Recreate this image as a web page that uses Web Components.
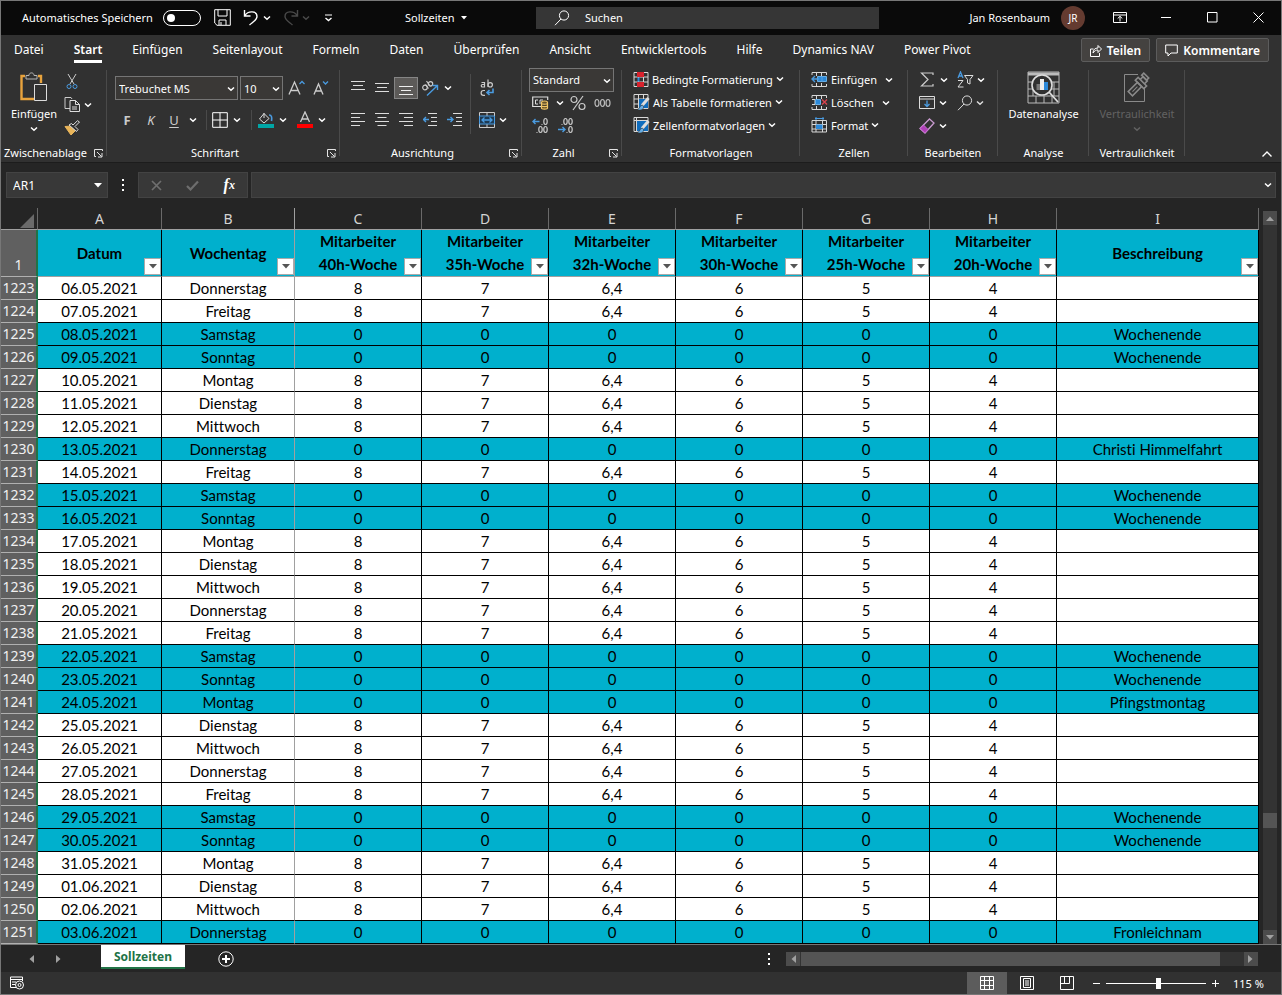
<!DOCTYPE html>
<html lang="de">
<head>
<meta charset="utf-8">
<title>Sollzeiten</title>
<style>
  html, body { margin: 0; background: #262626; }
  body { font-family: "Noto Sans", "Open Sans", sans-serif; font-size: 11px; color: #fff; }
</style>
</head>
<body>
<xl-app></xl-app>
<script>
const BASE = `
  :host, *, *::before { box-sizing: border-box; }
  button, input, select { font: inherit; color: inherit; background: none; border: 0; padding: 0; margin: 0; border-radius: 0; }
  button { display: inline-flex; align-items: center; justify-content: center; white-space: nowrap; }
`;
function define(name, html, setup) {
  const template = document.createElement('template');
  template.innerHTML = html;
  customElements.define(name, class extends HTMLElement {
    constructor() {
      super();
      this.attachShadow({ mode: 'open' }).append(template.content.cloneNode(true));
    }
    connectedCallback() {
      if (setup && !this.ready) { this.ready = true; setup(this, this.shadowRoot); }
    }
  });
}

/* Icons: [width, height, markup]; strokes inherit currentColor */
const GRID = '<path d="M1 .5h14v14H1zM1 5h14M1 10h14M5.5.5v14M10.5.5v14" stroke="#d8d8d8"/>';
const ICONS = {
  chev: [8, 6, '<path d="M1 1.5 4 4.3 7 1.5" stroke-width="1.5"/>'],
  up: [12, 8, '<path d="M1.5 6.5 6 2l4.500 4.500" stroke-width="1.400"/>'],
  tri: [8, 5, '<path d="M0 0h8L4 4.500z" fill="currentColor" stroke="none"/>'],
  triUp: [8, 5, '<path d="M0 5h8L4 .5z" fill="currentColor" stroke="none"/>'],
  triLeft: [5, 8, '<path d="M5 0v8L.5 4z" fill="currentColor" stroke="none"/>'],
  triRight: [5, 8, '<path d="M0 0v8l4.500-4z" fill="currentColor" stroke="none"/>'],
  save: [17, 17, '<path d="M.7.7h15.600v15.600H3L.7 14zM4 .7V7h9V.7M5 16v-5h7v5M7 16v-3"/>'],
  undo: [16, 17, '<path d="M1.500 1v6h6M2 6.500C5 1.500 14 1.500 14 7.500 14 11 10 13 6.500 16" stroke-width="1.400"/>'],
  redo: [16, 17, '<path d="M14.500 1v6h-6M14 6.500C11 1.500 2 1.500 2 7.500 2 11 6 13 9.500 16" stroke-width="1.400"/>'],
  qat: [9, 8, '<path d="M1 1h7"/><path d="M1.500 4 4.500 6.500 7.500 4" stroke-width="1.400"/>'],
  lens: [16, 16, '<circle cx="10" cy="5.500" r="4.600"/><path d="M7 9 1 15.200"/>'],
  ribbonOpts: [14, 11, '<path d="M.5.5h13v10H.5zM.5 3h13M7 9.500V4.500M4.700 6.500 7 4.300l2.300 2.200"/>'],
  min: [10, 10, '<path d="M0 4.500h10"/>'],
  max: [11, 11, '<path d="M.5.5h9.500v9.500H.5z"/>'],
  close: [11, 11, '<path d="M.5.5l10 10M10.500.5l-10 10"/>'],
  share: [12, 13, '<path d="M3.500 5H.5v7.500h9V9M3 9c.3-3.500 2-5 5-5V1.500L11.500 5 8 8.500V6C6 6 4.500 6.800 3 9z"/>'],
  comment: [13, 13, '<path d="M.7 1h11.600v8H6l-3 3V9H.7z"/>'],
  paste: [30, 33, '<path d="M6 5H2.500v23H15M19 5h3v7" stroke="#e8a33d" stroke-width="2.400"/><path d="M7 8V4.500h3C10 1 15 1 15 4.500h3V8z" stroke="#b5b5b5" fill="#313131"/><path d="M15.500 13.500h12v16h-12z" stroke="#ddd" fill="#313131"/>'],
  cut: [14, 17, '<path d="M3 1l6 10M11 1 5 11" stroke="#ccc"/><circle cx="4" cy="13.500" r="2" stroke="#4a9be0"/><circle cx="10" cy="13.500" r="2" stroke="#4a9be0"/>'],
  copy: [17, 17, '<path d="M6 12.500H1v-11h6L8 3" stroke="#ccc"/><path d="M6 4.500h5.500l4 4v7H6zM11.500 4.500v4h4M8 11h5M8 13h5" stroke="#ddd"/>'],
  brush: [17, 16, '<path d="M1 6.500 7 15l5-5-4-4z" fill="#e9b55a" stroke="#e9b55a"/><path d="M5 5l7.500 6.500 1.500-2-3-3L15.500 2 13.500.7 9 5 7.500 3.500z" stroke="#ddd" fill="#313131"/>'],
  borders: [16, 16, '<path d="M.7.7h14.600v14.600H.7zM8 .7v14.600M.7 8h14.600"/>'],
  bucket: [18, 18, '<path d="M7 2v5M7 2.500 2.500 8l4.500 4 5-4.500z" stroke="#ddd"/><path d="M12 4c3 0 3 3 2.500 6" stroke="#4a9be0" stroke-width="1.600"/><path d="M1 13h16v4H1z" fill="#00a6a6" stroke="none"/>'],
  fontColor: [18, 18, '<path d="M4.500 11 9 1l4.500 10M6 8h6" stroke="#ccc" stroke-width="1.300"/><path d="M1 13h16v4H1z" fill="#f00" stroke="none"/>'],
  growFont: [18, 16, '<path d="M1 14.500 6.500 2 12 14.500M3 10.500h7" stroke="#ccc" stroke-width="1.300"/><path d="M11.500 4 14 1.500 16.500 4" stroke="#4a9be0" stroke-width="1.300"/>'],
  shrinkFont: [18, 16, '<path d="M2 14.500 6.500 4 11 14.500M3.500 11h6" stroke="#ccc" stroke-width="1.300"/><path d="M11 1.500 13.500 4 16 1.500" stroke="#4a9be0" stroke-width="1.300"/>'],
  top: [14, 14, '<path d="M0 .5h14M2 4.500h10M0 8.500h14" stroke="#ddd"/>'],
  middle: [14, 14, '<path d="M0 2.500h14M2 6.500h10M0 10.500h14" stroke="#ddd"/>'],
  bottom: [14, 14, '<path d="M0 5.500h14M2 9.500h10M0 13.500h14" stroke="#eee"/>'],
  left: [14, 14, '<path d="M0 .5h14M0 4.500h9M0 8.500h14M0 12.500h9" stroke="#ddd"/>'],
  center: [14, 14, '<path d="M0 .5h14M2.500 4.500h9M0 8.500h14M2.500 12.500h9" stroke="#ddd"/>'],
  right: [14, 14, '<path d="M0 .5h14M5 4.500h9M0 8.500h14M5 12.500h9" stroke="#ddd"/>'],
  outdent: [14, 14, '<path d="M5 .5h9M8 4.500h6M8 8.500h6M5 12.500h9" stroke="#ddd"/><path d="M6 6.500H.5M3 4 .5 6.500 3 9" stroke="#4a9be0" stroke-width="1.400"/>'],
  indent: [15, 14, '<path d="M6 .5h9M9 4.500h6M9 8.500h6M6 12.500h9" stroke="#ddd"/><path d="M0 6.500h6M3.500 4 6 6.500 3.500 9" stroke="#4a9be0" stroke-width="1.400"/>'],
  orient: [18, 17, '<g stroke="#ccc" stroke-width="1.200"><circle cx="4" cy="7.500" r="2.300"/><path d="M4.500 4.500 7.500 8.500M5.500 1l4 5.500"/><circle cx="9.500" cy="3.800" r="2.200"/></g><path d="M6 15.500 16 6M11.500 5.500H16.500V10" stroke="#4a9be0" stroke-width="1.400"/>'],
  wrap: [16, 18, '<g stroke="#ccc" stroke-width="1.200"><path d="M2.500 3.500H5.500V8H3.500a1.200 1.200 0 0 1 0-2.500h2M9 .5V8"/><circle cx="11.200" cy="5.800" r="2.200"/><path d="M6 11.500H4.500a2.400 2.400 0 0 0 0 4.800H6"/></g><path d="M14 9.500v4H8M10.500 11 8 13.500 10.500 16" stroke="#4a9be0" stroke-width="1.600"/>'],
  merge: [16, 16, '<path d="M.5.5h15v15H.5zM8 .5V4M8 12v3" stroke="#ccc"/><path d="M.5 4h15v8H.5z" stroke="#4a9be0" fill="#1f3a52"/><path d="M3 8h10M5.500 5.500 3 8l2.500 2.500M10.500 5.500 13 8l-2.500 2.500" stroke="#4a9be0" stroke-width="1.300"/>'],
  currency: [18, 15, '<path d="M9 11.500H.7V2h15v3" stroke="#ddd" stroke-width="1.200"/><path d="M6 5H3.500v4H6M8 9V5h3" stroke="#ddd"/><path d="M9.500 7.500c0-2 6-2 6 0V13c0 1.500-6 1.500-6 0zM9.500 8c0 1.500 6 1.500 6 0M9.500 10.500c0 1.500 6 1.500 6 0" stroke="#f0c566" stroke-width="1.200" fill="#6b5426"/>'],
  percent: [16, 16, '<g stroke-width="1.200"><circle cx="4" cy="4.500" r="3"/><circle cx="12" cy="11.500" r="3"/><path d="M13 1 3 15"/></g>'],
  thousands: [17, 10, '<g stroke-width="1.200"><ellipse cx="3" cy="5" rx="2" ry="3.500"/><ellipse cx="8.500" cy="5" rx="2" ry="3.500"/><ellipse cx="14" cy="5" rx="2" ry="3.500"/></g>'],
  incDec: [17, 17, '<path d="M7.500 4.500H1M3.500 2 1 4.500 3.500 7" stroke="#4a9be0" stroke-width="1.400"/><g stroke="#ccc" stroke-width="1.200"><ellipse cx="13.500" cy="4.500" rx="1.700" ry="3"/><ellipse cx="8.500" cy="12.500" rx="1.700" ry="3"/><ellipse cx="13.500" cy="12.500" rx="1.700" ry="3"/><path d="M9.500 7.500h1M4.500 15.500h1"/></g>'],
  decDec: [17, 17, '<path d="M1 12.500h7M5.500 10 8 12.500 5.500 15" stroke="#4a9be0" stroke-width="1.400"/><g stroke="#ccc" stroke-width="1.200"><ellipse cx="8.500" cy="4.500" rx="1.700" ry="3"/><ellipse cx="13.500" cy="4.500" rx="1.700" ry="3"/><ellipse cx="13.500" cy="12.500" rx="1.700" ry="3"/><path d="M4.500 7.500h1M9.500 15.500h1"/></g>'],
  conditional: [16, 15, GRID + '<path d="M4 0h7v5H4zM4 10h7v5H4z" fill="#d8232e" stroke="none"/><path d="M4.500 5.500h2v4h-2z" fill="#2b88d8" stroke="none"/>'],
  tableFormat: [17, 17, GRID + '<path d="M6 5h9v9H6z" fill="#0f6cbd" stroke="none"/><path d="M15.500 4 9 11.500" stroke="#ddd" stroke-width="3"/><path d="M9.500 11c-3 0-2 4-5.500 4.500 4 1.500 7 0 6.500-3z" fill="#69afe5" stroke="#313131" stroke-width=".6"/>'],
  cellStyles: [17, 17, '<path d="M1 .5h14v14H1zM1 3.500h14M3.500.5v14" stroke="#d8d8d8"/><path d="M4 4h11v10H4z" fill="#0f6cbd" stroke="none"/><path d="M15.500 4 9 11.500" stroke="#ddd" stroke-width="3"/><path d="M9.500 11c-3 0-2 4-5.500 4.500 4 1.500 7 0 6.500-3z" fill="#69afe5" stroke="#313131" stroke-width=".6"/>'],
  insertCells: [17, 15, '<path d="M1 3V.5h14.500V3M5.500.5V4M10.500.5V4M1 12v2.500h14.500V12M5.500 11v3.500M10.500 11v3.500" stroke="#d8d8d8"/><path d="M6.500 4.500h9v5h-9z" fill="#2b88d8" stroke="#69afe5"/><path d="M11 4.500v5M8 7H1M4 4 1 7l3 3" stroke="#4a9be0" stroke-width="1.400"/>'],
  deleteCells: [17, 15, '<path d="M1 3V.5h14.500V3M5.500.5V4M10.500.5V4M1 12v2.500h14.500V12M5.500 11v3.500M10.500 11v3.500M1 4.500h3v5H1" stroke="#d8d8d8"/><path d="M4.500 4.500h5v5h-5z" fill="#2b88d8" stroke="#69afe5"/><path d="m11 4.500 5 5M16 4.500l-5 5" stroke="#d8434e" stroke-width="1.400"/>'],
  formatCells: [17, 16, '<path d="M1 3.500h14.500V15H1zM1 7.500h14.500M1 12h14.500M5 3.500V15M11.500 3.500V15" stroke="#d8d8d8"/><path d="M5 7.500h6.500V12H5z" fill="#2b88d8" stroke="none"/><path d="M4 1.500h9M5 0v3M12 0v3" stroke="#4a9be0"/>'],
  sum: [14, 15, '<path d="M13 3V1H1.500L8 7.500 1.500 14H13v-2" stroke="#ccc" stroke-width="1.200"/>'],
  sort: [17, 17, '<path d="M1 7 3.500 1 6 7M2 5h3" stroke="#4a9be0" stroke-width="1.300"/><path d="M1 9.500h5L1 16h5.500M7.500 4.500h8.500L13 8.500V13l-2.500-1V8.500z" stroke="#ddd"/>'],
  fill: [16, 15, '<path d="M.5 1.500h15v12H.5zM.5 4h15" stroke="#ddd"/><path d="M8 5.500v6M5.500 9 8 11.500 10.500 9" stroke="#4a9be0" stroke-width="1.300"/>'],
  eraser: [16, 16, '<path d="M10.500 1 15 5 6 15 1 10.500z" stroke="#c99bd0" stroke-width="1.300"/><path d="M4.500 7 9 11.500 6 15 1 10.500z" fill="#b03fb8" stroke="#c66ace"/>'],
  analysis: [33, 33, '<path d="M1 1h31v31H1zM1 11h31M1 18h31M1 25h31M9 25v7M17 25v7M25 25v7M6 11v14M27 11v14" stroke="#bbb"/><path d="M1 3h31" stroke="#bbb" stroke-width="3"/><circle cx="15" cy="14" r="10" fill="#313131" stroke="#ddd" stroke-width="1.600"/><path d="M22 21l9 10" stroke="#ddd" stroke-width="1.800"/><path d="M9.500 13h3.500v6H9.500z" fill="#777" stroke="none"/><path d="M13 8h4v11h-4z" fill="#eee" stroke="none"/><path d="M17 11h4v8h-4z" fill="#2b88d8" stroke="none"/>'],
  sensitivity: [30, 33, '<g stroke="#8a8a8a"><path d="M16 3.500H2.500v27h20V16"/><g transform="rotate(-45 14 17)"><path d="M6 14h13v6H6z" stroke-width="1.600"/><path d="M9 17h7"/><path d="M19 11h4v12h-4z" stroke-width="1.600"/><path d="M23 14h4v6h-4" stroke-width="1.600"/><path d="M27 12h3v7h-3z" stroke-width="1.600"/></g></g>'],
  launcher: [9, 9, '<path d="M2 7.500H.5V.5h8V2M3 3l4.500 4.500M8 4v4H4" stroke="#e4e4e4"/>'],
  x: [11, 11, '<path d="m1 1 9 9M10 1l-9 9" stroke-width="1.700"/>'],
  check: [13, 11, '<path d="m1 6 3.500 3.500L12 1.500" stroke-width="2.200"/>'],
  dots: [3, 12, '<path d="M0 0h2v2H0zM0 5h2v2H0zM0 10h2v2H0z" fill="currentColor" stroke="none"/>'],
  plusCircle: [16, 16, '<circle cx="8" cy="8" r="7.200"/><path d="M4 8h8M8 4v8" stroke-width="2"/>'],
  macro: [16, 14, '<path d="M7 11.500H1.500V1h12v4M1.500 3.500h12M3 6h4M3 8.500h3"/><circle cx="10.500" cy="9" r="4"/><circle cx="10.500" cy="9" r="1.500"/>'],
  viewNormal: [14, 14, '<path d="M.5.5h13v13H.5zM.5 4.500h13M.5 9.500h13M4.500.5v13M9.500.5v13"/>'],
  viewPage: [14, 14, '<path d="M.5.5h13v13H.5zM3.500 2.500h7v9h-7zM5 5h4M5 7h4M5 9h4"/>'],
  viewBreak: [14, 14, '<path d="M.5.5h13v13H.5zM4.500.5v7M9.500.5v7H.5"/>'],
  minus: [9, 9, '<path d="M1 4.500h7"/>'],
  plus: [9, 9, '<path d="M1 4.500h7M4.500 1v7"/>'],
  corner: [14, 14, '<path d="M14 0v14H0z" fill="#6a6a6a" stroke="none"/>']
};
define('xl-icon', `<style>:host{display:inline-flex;flex:none} svg{display:block}</style><span part="box"></span>`, (el, root) => {
  const [w, h, body] = ICONS[el.getAttribute('name')];
  root.querySelector('span').innerHTML = `<svg width="${w}" height="${h}" viewBox="0 0 ${w} ${h}" fill="none" stroke="currentColor" aria-hidden="true">${body}</svg>`;
});

/* Ribbon command: icon, optional caption in the slot, optional drop-down arrow */
define('xl-cmd', `<style>${BASE}
  :host { display: inline-flex; flex: none; }
  button { height: 22px; width: 100%; min-width: var(--cell, 16px); gap: 3px; }
  :host([pressed]) button { background: #5c5a58; border: 1px solid #858585; }
  :host([letter]) button { color: #ccc; font-size: 13px; }
</style><button type="button"><slot></slot></button>`, (el, root) => {
  const button = root.querySelector('button');
  button.setAttribute('aria-label', el.getAttribute('label') || el.textContent.trim() || 'Menü');
  const icon = el.getAttribute('icon');
  if (icon) button.insertAdjacentHTML('afterbegin', `<xl-icon name="${icon}"></xl-icon>`);
  if (el.hasAttribute('drop')) button.insertAdjacentHTML('beforeend', '<xl-icon name="chev"></xl-icon>');
});

define('xl-big-cmd', `<style>${BASE}
  :host { display: block; }
  button { flex-direction: column; justify-content: flex-start; width: 100%; line-height: 18px; }
  button:disabled { color: #626262; }
  .pic { height: 35px; display: flex; align-items: center; }
  .drop { height: 12px; display: flex; align-items: center; }
</style><button type="button"><span class="pic"></span><slot></slot><span class="drop"></span></button>`, (el, root) => {
  root.querySelector('.pic').innerHTML = `<xl-icon name="${el.getAttribute('icon')}"></xl-icon>`;
  if (el.hasAttribute('drop')) root.querySelector('.drop').innerHTML = '<xl-icon name="chev"></xl-icon>';
  root.querySelector('button').disabled = el.hasAttribute('disabled');
});

define('xl-select', `<style>${BASE}
  :host { display: inline-block; flex: none; position: relative; }
  select { appearance: none; display: block; width: 100%; height: 24px; border: 1px solid #757575; background: #3a3836; padding: 0 14px 0 3px; }
  xl-icon { position: absolute; right: 3px; top: 10px; pointer-events: none; }
</style><select><option></option></select><xl-icon name="chev"></xl-icon>`, (el, root) => {
  root.querySelector('option').textContent = el.getAttribute('value');
  root.querySelector('select').setAttribute('aria-label', el.getAttribute('label'));
});

define('xl-group', `<style>${BASE}
  :host { display: grid; grid-template-rows: 79px 17px; position: relative; flex: none; }
  :host::after { content: ""; position: absolute; right: 0; top: 4px; bottom: 6px; width: 1px; background: #4a4a4a; }
  footer { display: flex; align-items: center; line-height: 16px; padding-bottom: 1px; }
  footer span { flex: 1; text-align: center; white-space: nowrap; }
  :host([launcher]) footer { padding-right: 4px; }
  :host([launcher]) footer span { padding-right: 4px; }
</style><slot></slot><footer><span></span></footer>`, (el, root) => {
  root.querySelector('span').textContent = el.getAttribute('label');
  if (el.hasAttribute('launcher'))
    root.querySelector('footer').insertAdjacentHTML('beforeend', '<button type="button" aria-label="Mehr Optionen"><xl-icon name="launcher"></xl-icon></button>');
});

define('xl-title-bar', `<style>${BASE}
  :host { display: grid; grid-template-columns: 535px minmax(120px, 343px) 1fr; align-items: center; height: 34px; background: #0a0a0a; }
  .left, .right { display: flex; align-items: center; height: 34px; padding-bottom: 1px; }
  .left { padding-left: 21px; }
  .right { justify-content: flex-end; }
  label { display: flex; align-items: center; gap: 7px; white-space: nowrap; }
  .auto span { width: 134px; }
  .auto input { appearance: none; width: 38px; height: 16px; border: 1px solid #fff; border-radius: 8px; position: relative; }
  .auto input::before { content: ""; position: absolute; left: 3px; top: 3px; width: 8px; height: 8px; border-radius: 50%; background: #fff; }
  .save { margin-left: 13px; } .undo { margin-left: 12px; gap: 4px; } .redo { margin-left: 12px; gap: 3px; color: #4a4a4a; }
  .qat { margin-left: 14px; }
  .file { margin-left: 72px; gap: 6px; }
  .search { height: 22px; background: #363636; padding: 0 0 1px 18px; gap: 15px; }
  .search input { flex: 1; min-width: 0; outline: 0; }
  .search input::placeholder { color: #fff; opacity: 1; }
  .user { gap: 11px; margin-right: 12px; }
  .avatar { width: 24px; height: 24px; border-radius: 50%; background: #643b30; display: grid; place-items: center; font-size: 10px; }
  .win { width: 46px; height: 32px; flex: none; }
</style>
<div class="left">
  <label class="auto"><span>Automatisches Speichern</span><input type="checkbox" role="switch"></label>
  <button class="save" aria-label="Speichern"><xl-icon name="save"></xl-icon></button>
  <button class="undo" aria-label="Rückgängig"><xl-icon name="undo"></xl-icon><xl-icon name="chev"></xl-icon></button>
  <button class="redo" aria-label="Wiederholen"><xl-icon name="redo"></xl-icon><xl-icon name="chev"></xl-icon></button>
  <button class="qat" aria-label="Symbolleiste anpassen"><xl-icon name="qat"></xl-icon></button>
  <button class="file">Sollzeiten <svg width="6" height="4"><path d="M0 0h6L3 3.500z" fill="#fff"/></svg></button>
</div>
<label class="search"><xl-icon name="lens"></xl-icon><input type="search" placeholder="Suchen" aria-label="Suchen"></label>
<div class="right">
  <button class="user">Jan Rosenbaum <span class="avatar">JR</span></button>
  <button class="win" aria-label="Menüband-Anzeigeoptionen"><xl-icon name="ribbonOpts"></xl-icon></button>
  <button class="win" aria-label="Minimieren"><xl-icon name="min"></xl-icon></button>
  <button class="win" aria-label="Maximieren"><xl-icon name="max"></xl-icon></button>
  <button class="win" aria-label="Schließen"><xl-icon name="close"></xl-icon></button>
</div>`);

define('xl-tabs', `<style>${BASE}
  :host { display: flex; align-items: center; justify-content: space-between; height: 31px; background: #313131; padding: 0 12px 0 13px; font-size: 12px; }
  nav { display: flex; gap: 30px; }
  nav a { color: inherit; text-decoration: none; line-height: 20px; white-space: nowrap; border-bottom: 3px solid transparent; margin-top: 2px; }
  nav a[aria-current] { font-weight: 600; border-color: #fff; }
  div { display: flex; gap: 6px; margin-bottom: 1px; }
  div button { height: 24px; gap: 5px; padding: 0 8px; font-weight: 600; background: #444240; border: 1px solid #5c5c5c; border-radius: 2px; }
</style>
<nav>
  <a href="#">Datei</a><a href="#" aria-current="page">Start</a><a href="#">Einfügen</a><a href="#">Seitenlayout</a><a href="#">Formeln</a><a href="#">Daten</a><a href="#">Überprüfen</a><a href="#">Ansicht</a><a href="#">Entwicklertools</a><a href="#">Hilfe</a><a href="#">Dynamics NAV</a><a href="#">Power Pivot</a>
</nav>
<div><button><xl-icon name="share"></xl-icon>Teilen</button><button><xl-icon name="comment"></xl-icon>Kommentare</button></div>`);

define('xl-ribbon', `<style>${BASE}
  :host { display: flex; height: 97px; background: #313131; border-bottom: 1px solid #1c1c1c; }
  .row { display: flex; align-items: center; }
  .col { display: flex; flex-direction: column; }
  .three { padding-top: 2px; align-items: flex-start; }
  .three > .row, .three > xl-cmd { height: 23px; }
  .two { padding-top: 10px; gap: 8px; }
  .two > .row { height: 24px; }
  .sep { width: 1px; height: 20px; background: #4a4a4a; margin: 0 5px; }
  .tall { width: 1px; height: 60px; margin: 8px 8px 0 4px; background: #4a4a4a; }
  .c24 { --cell: 24px; } .c22 { --cell: 22px; } .c18 { --cell: 18px; }
  b { font-weight: 700; } u { text-underline-offset: 2px; }
  .collapse { margin: auto 8px 4px auto; }
</style>
<xl-group label="Zwischenablage" launcher style="width:106px">
  <div class="row" style="align-items:flex-start;padding:4px 0 0 3px">
    <xl-big-cmd icon="paste" drop style="width:60px">Einfügen</xl-big-cmd>
    <div class="col three" style="padding:0">
      <div class="row"><xl-cmd icon="cut" label="Ausschneiden"></xl-cmd></div>
      <div class="row"><xl-cmd icon="copy" drop label="Kopieren"></xl-cmd></div>
      <div class="row"><xl-cmd icon="brush" label="Format übertragen"></xl-cmd></div>
    </div>
  </div>
</xl-group>
<xl-group label="Schriftart" launcher style="width:233px">
  <div class="col two" style="padding-left:8px">
    <div class="row"><xl-select value="Trebuchet MS" label="Schriftart" style="width:123px"></xl-select><xl-select value="10" label="Schriftgrad" style="width:43px;margin:0 2px"></xl-select><xl-cmd class="c24" icon="growFont" label="Vergrößern"></xl-cmd><xl-cmd class="c24" icon="shrinkFont" label="Verkleinern"></xl-cmd></div>
    <div class="row"><xl-cmd letter class="c24" label="Fett"><b>F</b></xl-cmd><xl-cmd letter class="c24" label="Kursiv"><i>K</i></xl-cmd><xl-cmd letter class="c22" label="Unterstrichen"><u>U</u></xl-cmd><xl-cmd drop></xl-cmd><span class="sep"></span><xl-cmd icon="borders" label="Rahmen"></xl-cmd><xl-cmd drop class="c18"></xl-cmd><span class="sep"></span><xl-cmd class="c18" icon="bucket" label="Füllfarbe"></xl-cmd><xl-cmd drop></xl-cmd><span style="width:5px"></span><xl-cmd class="c18" icon="fontColor" label="Schriftfarbe"></xl-cmd><xl-cmd drop></xl-cmd></div>
  </div>
</xl-group>
<xl-group label="Ausrichtung" launcher style="width:182px">
  <div class="row" style="align-items:flex-start;padding-left:6px">
    <div class="col two">
      <div class="row"><xl-cmd class="c24" icon="top" label="Oben"></xl-cmd><xl-cmd class="c24" icon="middle" label="Mitte"></xl-cmd><xl-cmd pressed class="c24" icon="bottom" label="Unten"></xl-cmd><xl-cmd class="c24" icon="orient" label="Ausrichtung"></xl-cmd><xl-cmd drop style="--cell:12px"></xl-cmd></div>
      <div class="row"><xl-cmd class="c24" icon="left" label="Links"></xl-cmd><xl-cmd class="c24" icon="center" label="Zentriert"></xl-cmd><xl-cmd class="c24" icon="right" label="Rechts"></xl-cmd><xl-cmd class="c24" icon="outdent" label="Einzug verkleinern"></xl-cmd><xl-cmd class="c24" icon="indent" label="Einzug vergrößern"></xl-cmd></div>
    </div>
    <span class="tall"></span>
    <div class="col two">
      <div class="row"><xl-cmd icon="wrap" label="Textumbruch"></xl-cmd></div>
      <div class="row"><xl-cmd icon="merge" label="Verbinden"></xl-cmd><xl-cmd drop></xl-cmd></div>
    </div>
  </div>
</xl-group>
<xl-group label="Zahl" launcher style="width:100px">
  <div class="col three" style="padding-left:7px">
    <div class="row"><xl-select value="Standard" label="Zahlenformat" style="width:85px"></xl-select></div>
    <div class="row" style="gap:4px;padding-left:3px"><xl-cmd icon="currency" label="Währung"></xl-cmd><xl-cmd drop style="--cell:12px"></xl-cmd><xl-cmd icon="percent" label="Prozent" style="color:#ccc"></xl-cmd><xl-cmd icon="thousands" label="Tausender" style="color:#bbb;padding-left:4px"></xl-cmd></div>
    <div class="row" style="gap:8px;padding-left:3px"><xl-cmd icon="incDec" label="Dezimalstelle hinzufügen"></xl-cmd><xl-cmd icon="decDec" label="Dezimalstelle entfernen"></xl-cmd></div>
  </div>
</xl-group>
<xl-group label="Formatvorlagen" style="width:178px">
  <div class="col three" style="padding-left:11px">
    <xl-cmd icon="conditional" drop>Bedingte Formatierung</xl-cmd>
    <xl-cmd icon="tableFormat" drop>Als Tabelle formatieren</xl-cmd>
    <xl-cmd icon="cellStyles" drop>Zellenformatvorlagen</xl-cmd>
  </div>
</xl-group>
<xl-group label="Zellen" style="width:108px">
  <div class="col three" style="padding-left:11px">
    <div class="row"><xl-cmd icon="insertCells">Einfügen</xl-cmd><xl-cmd drop style="margin-left:4px"></xl-cmd></div>
    <div class="row"><xl-cmd icon="deleteCells">Löschen</xl-cmd><xl-cmd drop style="margin-left:4px"></xl-cmd></div>
    <xl-cmd icon="formatCells" drop>Format</xl-cmd>
  </div>
</xl-group>
<xl-group label="Bearbeiten" style="width:90px">
  <div class="col three" style="padding-left:11px">
    <div class="row"><xl-cmd icon="sum" label="Summe"></xl-cmd><xl-cmd drop class="c18"></xl-cmd><xl-cmd icon="sort" drop label="Sortieren" style="padding-left:4px"></xl-cmd></div>
    <div class="row"><xl-cmd icon="fill" label="Ausfüllen"></xl-cmd><xl-cmd drop></xl-cmd><xl-cmd icon="lens" drop label="Suchen" style="padding-left:6px;color:#ddd"></xl-cmd></div>
    <div class="row"><xl-cmd icon="eraser" label="Löschen"></xl-cmd><xl-cmd drop></xl-cmd></div>
  </div>
</xl-group>
<xl-group label="Analyse" style="width:91px">
  <xl-big-cmd icon="analysis" style="padding-top:4px">Datenanalyse</xl-big-cmd>
</xl-group>
<xl-group label="Vertraulichkeit" style="width:96px">
  <xl-big-cmd icon="sensitivity" drop disabled style="padding-top:4px">Vertraulichkeit</xl-big-cmd>
</xl-group>
<button class="collapse" aria-label="Menüband reduzieren"><xl-icon name="up"></xl-icon></button>`);

define('xl-formula-bar', `<style>${BASE}
  :host { display: flex; height: 45px; padding: 9px 5px 10px; background: #252525; font-size: 12px; }
  .box { display: flex; align-items: center; background: #383838; border: 1px solid #434343; }
  .name { width: 102px; padding: 0 5px 0 6px; }
  .name input { flex: 1; min-width: 0; }
  .dots { width: 30px; display: grid; place-items: center; }
  .tools { width: 110px; justify-content: space-around; color: #6e6e6e; }
  .fx { color: #fff; font: italic 700 16px "Liberation Serif", serif; }
  .fx small { font-size: 12px; }
  .formula { flex: 1; margin-left: 3px; padding-right: 3px; }
  .formula input { flex: 1; }
</style>
<div class="box name"><input value="AR1" aria-label="Namenfeld"><xl-icon name="tri"></xl-icon></div>
<div class="dots"><xl-icon name="dots"></xl-icon></div>
<div class="box tools"><button aria-label="Abbrechen"><xl-icon name="x"></xl-icon></button><button aria-label="Eingeben"><xl-icon name="check"></xl-icon></button><button class="fx">f<small>x</small></button></div>
<div class="box formula"><input aria-label="Bearbeitungsleiste"><button aria-label="Erweitern"><xl-icon name="chev"></xl-icon></button></div>`);

define('xl-scrollbar', `<style>${BASE}
  :host { display: flex; background: #333; color: #a0a0a0; }
  :host([vertical]) { flex-direction: column; }
  button { width: 14px; height: 14px; background: #4c4c4c; flex: none; }
  .before { flex: var(--before) 0 0; } .thumb { flex: var(--thumb) 0 0; background: #545454; } .after { flex: var(--after) 0 0; }
</style><button class="dec" aria-label="Zurück"></button><span class="before"></span><span class="thumb"></span><span class="after"></span><button class="inc" aria-label="Weiter"></button>`, (el, root) => {
  const v = el.hasAttribute('vertical');
  root.querySelector('.dec').innerHTML = `<xl-icon name="${v ? 'triUp' : 'triLeft'}"></xl-icon>`;
  root.querySelector('.inc').innerHTML = `<xl-icon name="${v ? 'tri' : 'triRight'}"></xl-icon>`;
});

define('xl-sheet', `<style>${BASE}
  :host { display: grid; grid-template-columns: minmax(0, 1fr) 22px; background: #252525; }
  table { border-collapse: separate; border-spacing: 0; table-layout: fixed; width: 100%; font: 15px "Trebuchet MS", Lato, sans-serif; font-variant-ligatures: none; color: #000; }
  th, td { padding: 0; text-align: center; font-weight: 400; overflow: hidden; white-space: nowrap; }
  .letters th { height: 22px; color: #d4d4d4; font: 14px "Noto Sans", sans-serif; line-height: 20px; border-right: 1px solid #6a6a6a; border-bottom: 1px solid #a0a0a0; }
  .letters .corner { text-align: right; line-height: 0; padding: 4px 3px 0 0; }
  .corner xl-icon { vertical-align: top; }
  tbody td, tbody .head { border-right: 1px solid #000; border-bottom: 1px solid #000; }
  tbody td { height: 23px; line-height: 22px; background: #fff; }
  tbody .num { background: #606060; color: #f0f0f0; font: 14px "Noto Sans", sans-serif; line-height: 22px; border-right: 2px solid #217346; border-bottom: 1px solid #b0b0b0; }
  tbody .free td, tbody .head { background: #00b0cd; }
  .title .head { height: 47px; font-weight: 700; line-height: 23px; position: relative; border-bottom-color: #a0a0a0; }
  .title .num { vertical-align: bottom; }
  tr > :nth-child(3) { border-right-color: #a0a0a0 !important; }
  .head button { position: absolute; right: 0; bottom: 1px; width: 17px; height: 17px; background: #fff; border: 1px solid #aaa; color: #555; }
  .side { padding: 3px 4px 0; display: flex; }
  xl-scrollbar { --before: 588; --thumb: 15; --after: 102; flex: 1; }
</style>
<table>
  <colgroup><col style="width:37px"><col style="width:124px"><col style="width:133px"><col style="width:127px"><col style="width:127px"><col style="width:127px"><col style="width:127px"><col style="width:127px"><col style="width:127px"><col></colgroup>
  <thead></thead><tbody></tbody>
</table>
<div class="side"><xl-scrollbar vertical></xl-scrollbar></div>`, (el, root) => {
  const days = ['Sonntag', 'Montag', 'Dienstag', 'Mittwoch', 'Donnerstag', 'Freitag', 'Samstag'];
  const holidays = { 1230: 'Christi Himmelfahrt', 1241: 'Pfingstmontag', 1251: 'Fronleichnam' };
  const heads = ['Datum', 'Wochentag', ...[40, 35, 32, 30, 25, 20].map(h => `Mitarbeiter<br>${h}h-Woche`), 'Beschreibung'];
  root.querySelector('thead').innerHTML = '<tr class="letters"><th class="corner"><xl-icon name="corner"></xl-icon></th>' +
    [...'ABCDEFGHI'].map(c => `<th scope="col">${c}</th>`).join('') + '</tr>';
  let rows = '<tr class="title"><th class="num">1</th>' +
    heads.map(h => `<th class="head" scope="col">${h}<button aria-label="Filter"><xl-icon name="tri"></xl-icon></button></th>`).join('') + '</tr>';
  for (let n = 1223; n <= 1251; n++) {
    const d = new Date(Date.UTC(2021, 4, 6 + n - 1223)), wd = d.getUTCDay();
    const note = holidays[n] || (wd % 6 === 0 ? 'Wochenende' : '');
    const date = [d.getUTCDate(), d.getUTCMonth() + 1].map(x => String(x).padStart(2, '0')).join('.') + '.2021';
    const hours = note ? Array(6).fill('0') : ['8', '7', '6,4', '6', '5', '4'];
    rows += `<tr class="${note ? 'free' : ''}"><th class="num" scope="row">${n}</th>` +
      [date, days[wd], ...hours, note].map(t => `<td>${t}</td>`).join('') + '</tr>';
  }
  root.querySelector('tbody').innerHTML = rows;
});

define('xl-sheet-tabs', `<style>${BASE}
  :host { display: flex; align-items: center; height: 28px; background: #252525; padding: 0 23px 0 17px; color: #fff; border-top: 1px solid #777; }
  .nav { width: 27px; color: #a0a0a0; }
  .sheet { align-self: flex-start; margin-left: 29px; height: 24px; width: 84px; background: #fff; color: #217346; font-weight: 700; font-size: 12px; border-bottom: 2px solid #217346; }
  .add { margin-left: 33px; }
  .space { flex: 1; }
  .dots { width: 18px; }
  xl-scrollbar { width: 472px; --before: 1; --thumb: 418; --after: 24; }
</style>
<button class="nav" aria-label="Vorheriges Blatt"><xl-icon name="triLeft"></xl-icon></button><button class="nav" aria-label="Nächstes Blatt"><xl-icon name="triRight"></xl-icon></button>
<button class="sheet">Sollzeiten</button>
<button class="add" aria-label="Neues Blatt"><xl-icon name="plusCircle"></xl-icon></button>
<span class="space"></span><xl-icon class="dots" name="dots"></xl-icon><xl-scrollbar></xl-scrollbar>`);

define('xl-status', `<style>${BASE}
  :host { display: flex; align-items: center; height: 22px; background: #313131; padding: 0 18px 0 8px; }
  .space { flex: 1; }
  .view { width: 40px; height: 22px; }
  .view[aria-pressed] { background: #5c5c5c; }
  .step { width: 19px; }
  input { appearance: none; width: 100px; height: 12px; background: linear-gradient(#fff, #fff) center / 100% 1px no-repeat; }
  input::-webkit-slider-thumb { appearance: none; width: 5px; height: 11px; background: #fff; }
  output { width: 30px; margin-left: 8px; white-space: nowrap; }
</style>
<button aria-label="Makro aufzeichnen"><xl-icon name="macro"></xl-icon></button><span class="space"></span>
<button class="view" aria-pressed="true" aria-label="Normal"><xl-icon name="viewNormal"></xl-icon></button><button class="view" aria-label="Seitenlayout"><xl-icon name="viewPage"></xl-icon></button><button class="view" aria-label="Umbruchvorschau"><xl-icon name="viewBreak"></xl-icon></button>
<button class="step" aria-label="Verkleinern"><xl-icon name="minus"></xl-icon></button><input type="range" min="0" max="100" value="53" aria-label="Zoom"><button class="step" aria-label="Vergrößern"><xl-icon name="plus"></xl-icon></button><output>115 %</output>`);

define('xl-app', `<style>
  :host { display: block; border: 1px solid #777; background: #252525; }
</style>
<xl-title-bar></xl-title-bar><xl-tabs></xl-tabs><xl-ribbon></xl-ribbon><xl-formula-bar></xl-formula-bar><xl-sheet></xl-sheet><xl-sheet-tabs></xl-sheet-tabs><xl-status></xl-status>`);
</script>
</body>
</html>
